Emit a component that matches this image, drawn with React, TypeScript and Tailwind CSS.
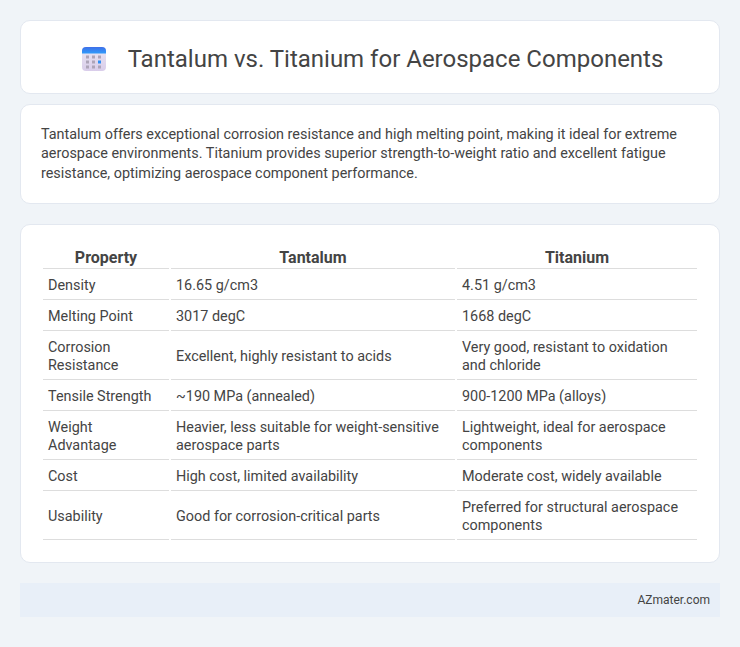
const rows: [string, string, string][] = [
  ["Density", "16.65 g/cm3", "4.51 g/cm3"],
  ["Melting Point", "3017 degC", "1668 degC"],
  ["Corrosion Resistance", "Excellent, highly resistant to acids", "Very good, resistant to oxidation and chloride"],
  ["Tensile Strength", "~190 MPa (annealed)", "900-1200 MPa (alloys)"],
  ["Weight Advantage", "Heavier, less suitable for weight-sensitive aerospace parts", "Lightweight, ideal for aerospace components"],
  ["Cost", "High cost, limited availability", "Moderate cost, widely available"],
  ["Usability", "Good for corrosion-critical parts", "Preferred for structural aerospace components"],
];

function CalendarIcon() {
  const cells = [0, 1, 2];
  return (
    <svg width="24" height="24" viewBox="0 0 24 24" className="shrink-0">
      <defs>
        <linearGradient id="body" x1="0" y1="0" x2="0" y2="1">
          <stop offset="0" stopColor="#ebe7f3" />
          <stop offset="1" stopColor="#d9cdea" />
        </linearGradient>
        <linearGradient id="top" x1="0" y1="0" x2="0" y2="1">
          <stop offset="0" stopColor="#3f6fe8" />
          <stop offset="1" stopColor="#2f9bfb" />
        </linearGradient>
      </defs>
      <rect x="0" y="0" width="24" height="24" rx="4" fill="url(#body)" />
      <path d="M0 6.5V4a4 4 0 0 1 4-4h16a4 4 0 0 1 4 4v2.5z" fill="url(#top)" />
      {cells.map((r) =>
        cells.map((c) => (
          <rect
            key={`${r}-${c}`}
            x={4 + c * 6}
            y={8.5 + r * 5}
            width="3"
            height="3"
            fill={r === 1 && c === 2 ? "#2f8ff5" : "#aea5b9"}
          />
        ))
      )}
    </svg>
  );
}

export default function App() {
  return (
    <div className="min-h-[647px] bg-[#f0f4f8] p-5 font-['Roboto',sans-serif] text-[#444]">
      <div className="flex h-[74px] items-center justify-center gap-[22px] rounded-[10px] border border-[#e3e8f0] bg-white pt-1 pl-[5px]">
        <CalendarIcon />
        <h1 className="text-2xl font-normal text-[#444]">Tantalum vs. Titanium for Aerospace Components</h1>
      </div>
      <div className="mt-2.5 rounded-[10px] border border-[#e3e8f0] bg-white p-5 text-[14.4px]">
        <p className="leading-[19.33px]">
          Tantalum offers exceptional corrosion resistance and high melting point, making it ideal for extreme aerospace environments. Titanium provides superior strength-to-weight ratio and excellent fatigue resistance, optimizing aerospace component performance.
        </p>
      </div>
      <div className="mt-5 rounded-[10px] border border-[#e3e8f0] bg-white p-5">
        <table className="w-full table-fixed border-separate border-spacing-[2px] text-[14.4px] leading-[18px]">
          <colgroup>
            <col className="w-[126px]" />
            <col className="w-[284px]" />
            <col />
          </colgroup>
          <thead>
            <tr>
              <th className="border-b border-[#ddd] text-center text-base leading-[21px] font-bold">Property</th>
              <th className="border-b border-[#ddd] text-center text-base leading-[21px] font-bold">Tantalum</th>
              <th className="border-b border-[#ddd] text-center text-base leading-[21px] font-bold">Titanium</th>
            </tr>
          </thead>
          <tbody>
            {rows.map((r) => (
              <tr key={r[0]}>
                {r.map((t, i) => (
                  <td key={i} className="border-b border-[#ddd] px-[5px] pt-[6px] pb-[4px] text-left">{t}</td>
                ))}
              </tr>
            ))}
          </tbody>
        </table>
      </div>
      <div className="mt-5 flex h-[34px] items-center justify-end bg-[#e8eff8] px-2.5 text-xs text-[#444]">
        AZmater.com
      </div>
    </div>
  );
}
